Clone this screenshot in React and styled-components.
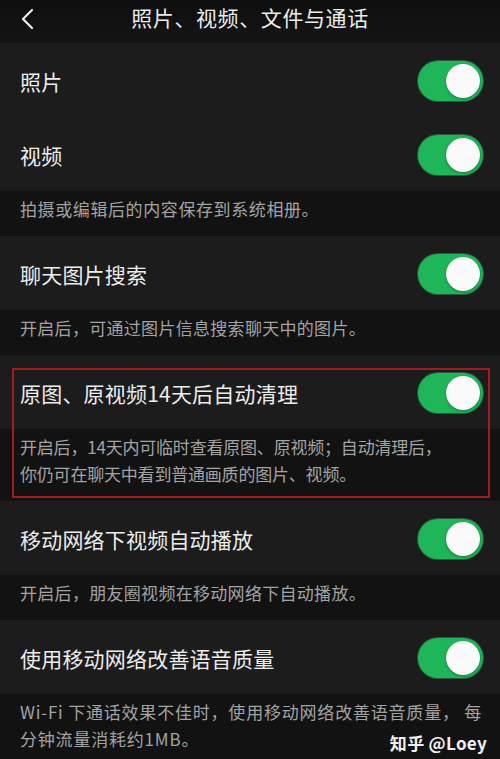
import React from "react";
import styled, { createGlobalStyle } from "styled-components";

const Global = createGlobalStyle`
  html, body { margin: 0; padding: 0; background: #111111; }
  body { font-family: "Noto Sans CJK SC", "Noto Sans", sans-serif; -webkit-font-smoothing: antialiased; }
`;

const Screen = styled.div`
  width: 500px;
  height: 759px;
  overflow: hidden;
  background: #111111;
  display: flex;
  flex-direction: column;
`;

const Header = styled.header`
  height: 43px;
  flex: none;
  display: grid;
  grid-template-columns: 60px 1fr 60px;
  align-items: center;
  padding-bottom: 8px;
  box-sizing: border-box;
  background: linear-gradient(#0e0e0e, #151515);
`;

const Back = styled.div`
  display: flex;
  align-items: center;
  padding-left: 19px;
  padding-top: 2px;
`;

const Title = styled.h1`
  margin: 0;
  text-align: center;
  font-size: 21px;
  font-weight: 400;
  letter-spacing: 0.6px;
  color: #ececec;
  line-height: 1;
`;

const Row = styled.div`
  height: ${(p) => p.$h || 74}px;
  box-sizing: border-box;
  flex: none;
  display: flex;
  align-items: center;
  justify-content: space-between;
  padding: 2px 17px 0 20px;
  background: #1c1c1c;
`;

const Label = styled.span`
  font-size: 21px;
  color: #ededed;
  letter-spacing: 0.2px;
`;

const Desc = styled.div`
  position: relative;
  flex: none;
  box-sizing: border-box;
  padding: 4px 14px 14px 20px;
  background: #121212;
  font-size: 17px;
  line-height: 27px;
  color: #a3a3a3;
  letter-spacing: ${(p) => (p.$ls !== undefined ? p.$ls : 0.3)}px;
  white-space: nowrap;
`;

const Highlight = styled.div`
  position: relative;
  flex: none;
  display: flex;
  flex-direction: column;
`;

const RedFrame = styled.div`
  position: absolute;
  left: 12px;
  right: 10px;
  top: 13px;
  bottom: 3px;
  border: 2px solid #a11d1d;
  pointer-events: none;
`;

const Track = styled.div`
  width: 65px;
  height: 40px;
  border-radius: 20px;
  background: #1fb65a;
  box-shadow: 0 0 0 1px #2a5a3b;
  position: relative;
  flex: none;
`;

const Knob = styled.div`
  position: absolute;
  right: 3px;
  top: 3px;
  width: 34px;
  height: 34px;
  border-radius: 50%;
  background: #fafafa;
  box-shadow: 0 1px 3px rgba(0, 0, 0, 0.35);
`;

const Watermark = styled.span`
  position: absolute;
  right: 13px;
  bottom: 10px;
  font-size: 17px;
  font-weight: 700;
  color: #f2f2f2;
  letter-spacing: 0.3px;
`;

const Toggle = () => (
  <Track>
    <Knob />
  </Track>
);

const Chevron = () => (
  <svg width="16" height="22" viewBox="0 0 16 22">
    <path d="M13 2 L4 11 L13 20" fill="none" stroke="#ededed" strokeWidth="2.2" strokeLinecap="round" strokeLinejoin="round" />
  </svg>
);

export default function App() {
  return (
    <Screen>
      <Global />
      <Header>
        <Back>
          <Chevron />
        </Back>
        <Title>照片、视频、文件与通话</Title>
        <span />
      </Header>

      <Row $h={74}>
        <Label>照片</Label>
        <Toggle />
      </Row>
      <Row $h={74}>
        <Label>视频</Label>
        <Toggle />
      </Row>
      <Desc $ls={0.6}>拍摄或编辑后的内容保存到系统相册。</Desc>

      <Row>
        <Label>聊天图片搜索</Label>
        <Toggle />
      </Row>
      <Desc>开启后，可通过图片信息搜索聊天中的图片。</Desc>

      <Highlight>
        <Row>
          <Label>原图、原视频14天后自动清理</Label>
          <Toggle />
        </Row>
        <Desc $ls={-0.2}>
          开启后，14天内可临时查看原图、原视频；自动清理后，
          <br />
          你仍可在聊天中看到普通画质的图片、视频。
        </Desc>
        <RedFrame />
      </Highlight>

      <Row>
        <Label>移动网络下视频自动播放</Label>
        <Toggle />
      </Row>
      <Desc>开启后，朋友圈视频在移动网络下自动播放。</Desc>

      <Row>
        <Label>使用移动网络改善语音质量</Label>
        <Toggle />
      </Row>
      <Desc $ls={0.8}>
        Wi-Fi 下通话效果不佳时，使用移动网络改善语音质量， 每
        <br />
        分钟流量消耗约1MB。
        <Watermark>知乎 @Loey</Watermark>
      </Desc>
    </Screen>
  );
}
